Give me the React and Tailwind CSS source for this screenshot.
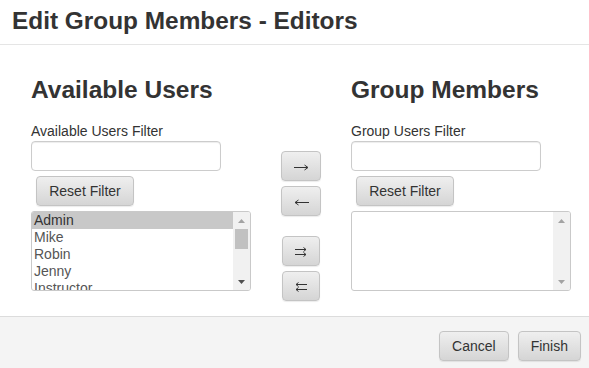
import React from "react";

const btn =
  "h-[30px] rounded-[4px] border border-[#c4c4c4] bg-gradient-to-b from-[#efefef] to-[#d5d5d5] text-[14px] leading-[20px] text-[#333] shadow-[0_1px_1px_rgba(0,0,0,0.08)] flex items-center justify-center";

function ArrowRight() {
  return (
    <svg width="15" height="7" viewBox="0 0 15 7" className="mt-[3px]">
      <path d="M0 3.5H13.5" stroke="#333" strokeWidth="1" />
      <path d="M10.5 1L14 3.5L10.5 6" stroke="#333" strokeWidth="1" fill="none" />
    </svg>
  );
}
function ArrowLeft() {
  return (
    <svg width="15" height="7" viewBox="0 0 15 7" className="mt-[3px]">
      <path d="M1 3.5H15" stroke="#333" strokeWidth="1" />
      <path d="M4.5 1L1 3.5L4.5 6" stroke="#333" strokeWidth="1" fill="none" />
    </svg>
  );
}
function PairRight() {
  return (
    <svg width="12" height="10" viewBox="0 0 12 10" className="mt-[1px]">
      <path d="M0 2.5H11M0 7.5H11" stroke="#333" strokeWidth="1" />
      <path d="M8.5 0.5L11 2.5L8.5 4.5M8.5 5.5L11 7.5L8.5 9.5" stroke="#333" strokeWidth="1" fill="none" />
    </svg>
  );
}
function PairLeft() {
  return (
    <svg width="12" height="10" viewBox="0 0 12 10" className="mt-[1px]">
      <path d="M1 2.5H12M1 7.5H12" stroke="#333" strokeWidth="1" />
      <path d="M3.5 0.5L1 2.5L3.5 4.5M3.5 5.5L1 7.5L3.5 9.5" stroke="#333" strokeWidth="1" fill="none" />
    </svg>
  );
}

function Scrollbar({ thumb }) {
  return (
    <div className="w-[17px] h-full bg-[#f1f1f1] flex flex-col items-center">
      <div className="h-[17px] flex items-center justify-center">
        <svg width="7" height="4" viewBox="0 0 7 4">
          <path d="M0 4L3.5 0L7 4Z" fill="#a3a3a3" />
        </svg>
      </div>
      <div className="flex-1 w-full px-[2px]">
        {thumb && <div className="h-[20px] w-full bg-[#c1c1c1]" />}
      </div>
      <div className="h-[17px] flex items-center justify-center">
        <svg width="7" height="4" viewBox="0 0 7 4">
          <path d="M0 0L3.5 4L7 0Z" fill={thumb ? "#505050" : "#a3a3a3"} />
        </svg>
      </div>
    </div>
  );
}

function Column({ title, label, items }) {
  return (
    <div className="flex flex-col items-start">
      <h2 className="text-[24.5px] leading-[24px] font-bold text-[#333]">{title}</h2>
      <label className="mt-[19px] text-[14px] leading-[20px] text-[#333]">{label}</label>
      <input
        type="text"
        className="w-[190px] h-[30px] rounded-[4px] border border-[#ccc] bg-white shadow-[inset_0_1px_1px_rgba(0,0,0,0.075)] outline-none"
      />
      <button className={btn + " mt-[5px] ml-[5px] w-[98px]"}>Reset Filter</button>
      <div className="mt-[5px] w-[220px] h-[80px] rounded-[3px] border border-[#c9c9c9] bg-white flex overflow-hidden">
        <div className="flex-1 overflow-hidden">
          {items.map((it, i) => (
            <div
              key={it}
              className={
                "h-[17px] pl-[2px] text-[14px] leading-[17px] whitespace-nowrap " +
                (i === 0 ? "bg-[#c8c8c8] text-[#333]" : "text-[#555]")
              }
            >
              {it}
            </div>
          ))}
        </div>
        <Scrollbar thumb={items.length > 0} />
      </div>
    </div>
  );
}

export default function App() {
  return (
    <div className="w-[589px] h-[368px] bg-white flex flex-col overflow-hidden font-['Liberation_Sans',Arial,sans-serif] text-[#333]">
      <header className="h-[45px] shrink-0 border-b border-[#e5e5e5] pl-[12px] pt-[9px]">
        <h1 className="text-[24.4px] leading-[24px] font-bold text-[#333]">Edit Group Members - Editors</h1>
      </header>
      <main className="flex-1 flex pl-[31px] pt-[33px]">
        <div className="w-[250px]">
          <Column
            title="Available Users"
            label="Available Users Filter"
            items={["Admin", "Mike", "Robin", "Jenny", "Instructor"]}
          />
        </div>
        <div className="w-[70px] pt-[73px] flex flex-col">
          <button className={btn + " w-[40px]"}><ArrowRight /></button>
          <button className={btn + " w-[40px] mt-[5px]"}><ArrowLeft /></button>
          <button className={btn + " w-[38px] ml-[1px] mt-[20px]"}><PairRight /></button>
          <button className={btn + " w-[38px] ml-[1px] mt-[5px]"}><PairLeft /></button>
        </div>
        <div>
          <Column title="Group Members" label="Group Users Filter" items={[]} />
        </div>
      </main>
      <footer className="h-[52px] shrink-0 border-t border-[#dcdcdc] bg-[#f4f4f4] flex justify-end items-start pt-[14px] pr-[8px] gap-[9px]">
        <button className={btn + " px-[12px]"}>Cancel</button>
        <button className={btn + " px-[12px]"}>Finish</button>
      </footer>
    </div>
  );
}
